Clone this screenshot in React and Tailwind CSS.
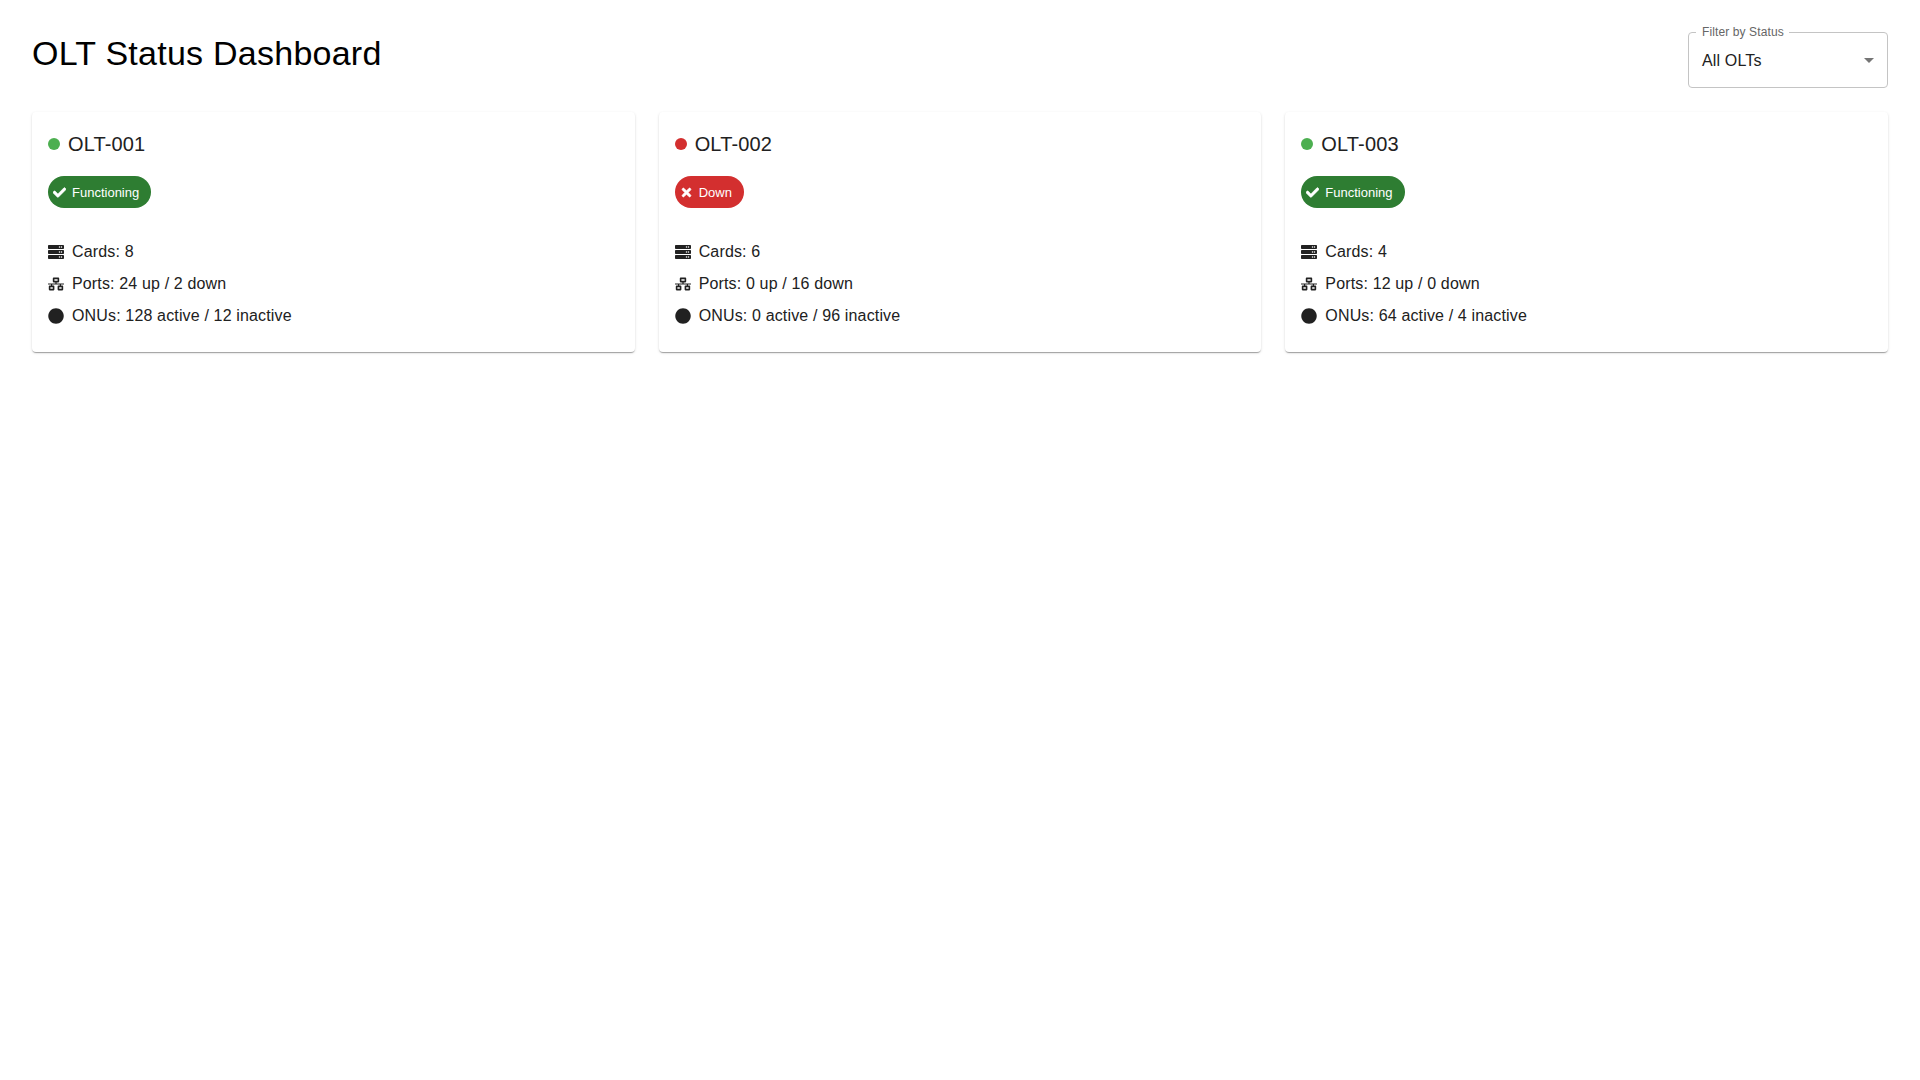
import { FaServer, FaNetworkWired, FaCircle, FaCheck, FaTimes } from "react-icons/fa";

const data = [
  { id: "OLT-001", up: true, cards: 8, ports: "24 up / 2 down", onus: "128 active / 12 inactive" },
  { id: "OLT-002", up: false, cards: 6, ports: "0 up / 16 down", onus: "0 active / 96 inactive" },
  { id: "OLT-003", up: true, cards: 4, ports: "12 up / 0 down", onus: "64 active / 4 inactive" },
];

function Card({ o }) {
  return (
    <div className="bg-white rounded shadow-[0px_2px_1px_-1px_rgba(0,0,0,0.2),0px_1px_1px_0px_rgba(0,0,0,0.14),0px_1px_3px_0px_rgba(0,0,0,0.12)] p-4 pb-6">
      <div className="flex items-center gap-2 h-8 mb-4">
        <span className={"w-3 h-3 rounded-full " + (o.up ? "bg-[#4caf50]" : "bg-[#d32f2f]")} />
        <span className="text-[20px] leading-8 tracking-[0.15px] text-[#212121]">{o.id}</span>
      </div>
      <div className={"flex w-fit items-center h-8 rounded-2xl text-white text-[13px] " + (o.up ? "bg-[#2e7d32]" : "bg-[#d32f2f]")}>
        {o.up
          ? <FaCheck size={13} strokeWidth={24} className="ml-[5px] text-white" />
          : <FaTimes size={13} strokeWidth={24} className="ml-[5px] text-white" />}
        <span className="pl-[6px] pr-3 pt-[2px] leading-normal">{o.up ? "Functioning" : "Down"}</span>
      </div>
      <div className="mt-8 flex flex-col gap-2 text-base leading-6 tracking-[0.15px] text-[#212121]">
        <div className="flex items-center gap-2"><FaServer size={16} /><span>Cards: {o.cards}</span></div>
        <div className="flex items-center gap-2"><FaNetworkWired size={16} /><span>Ports: {o.ports}</span></div>
        <div className="flex items-center gap-2"><FaCircle size={16} /><span>ONUs: {o.onus}</span></div>
      </div>
    </div>
  );
}

export default function App() {
  return (
    <div className="min-h-screen bg-white p-8 font-['Liberation_Sans',Arial,sans-serif]">
      <div className="flex justify-between items-start mb-6">
        <h1 className="text-[34px] leading-[42px] tracking-[0.25px] text-[#000]">OLT Status Dashboard</h1>
        <div className="relative w-[200px] h-14">
          <div className="h-14 border border-[#c4c4c4] rounded flex items-center justify-between pl-[13px] pr-[6px] text-base tracking-[0.15px] text-[#212121]">
            <span className="relative top-px">All OLTs</span>
            <svg viewBox="0 0 24 24" className="w-6 h-6 fill-[#757575]"><path d="M7 10l5 5 5-5z" /></svg>
          </div>
          <span className="absolute left-2 -top-[7px] pl-[6px] pr-[5px] bg-white text-xs leading-[14px] tracking-[0.11px] text-[#666]">Filter by Status</span>
        </div>
      </div>
      <div className="grid grid-cols-3 gap-6">
        {data.map((o) => <Card key={o.id} o={o} />)}
      </div>
    </div>
  );
}
